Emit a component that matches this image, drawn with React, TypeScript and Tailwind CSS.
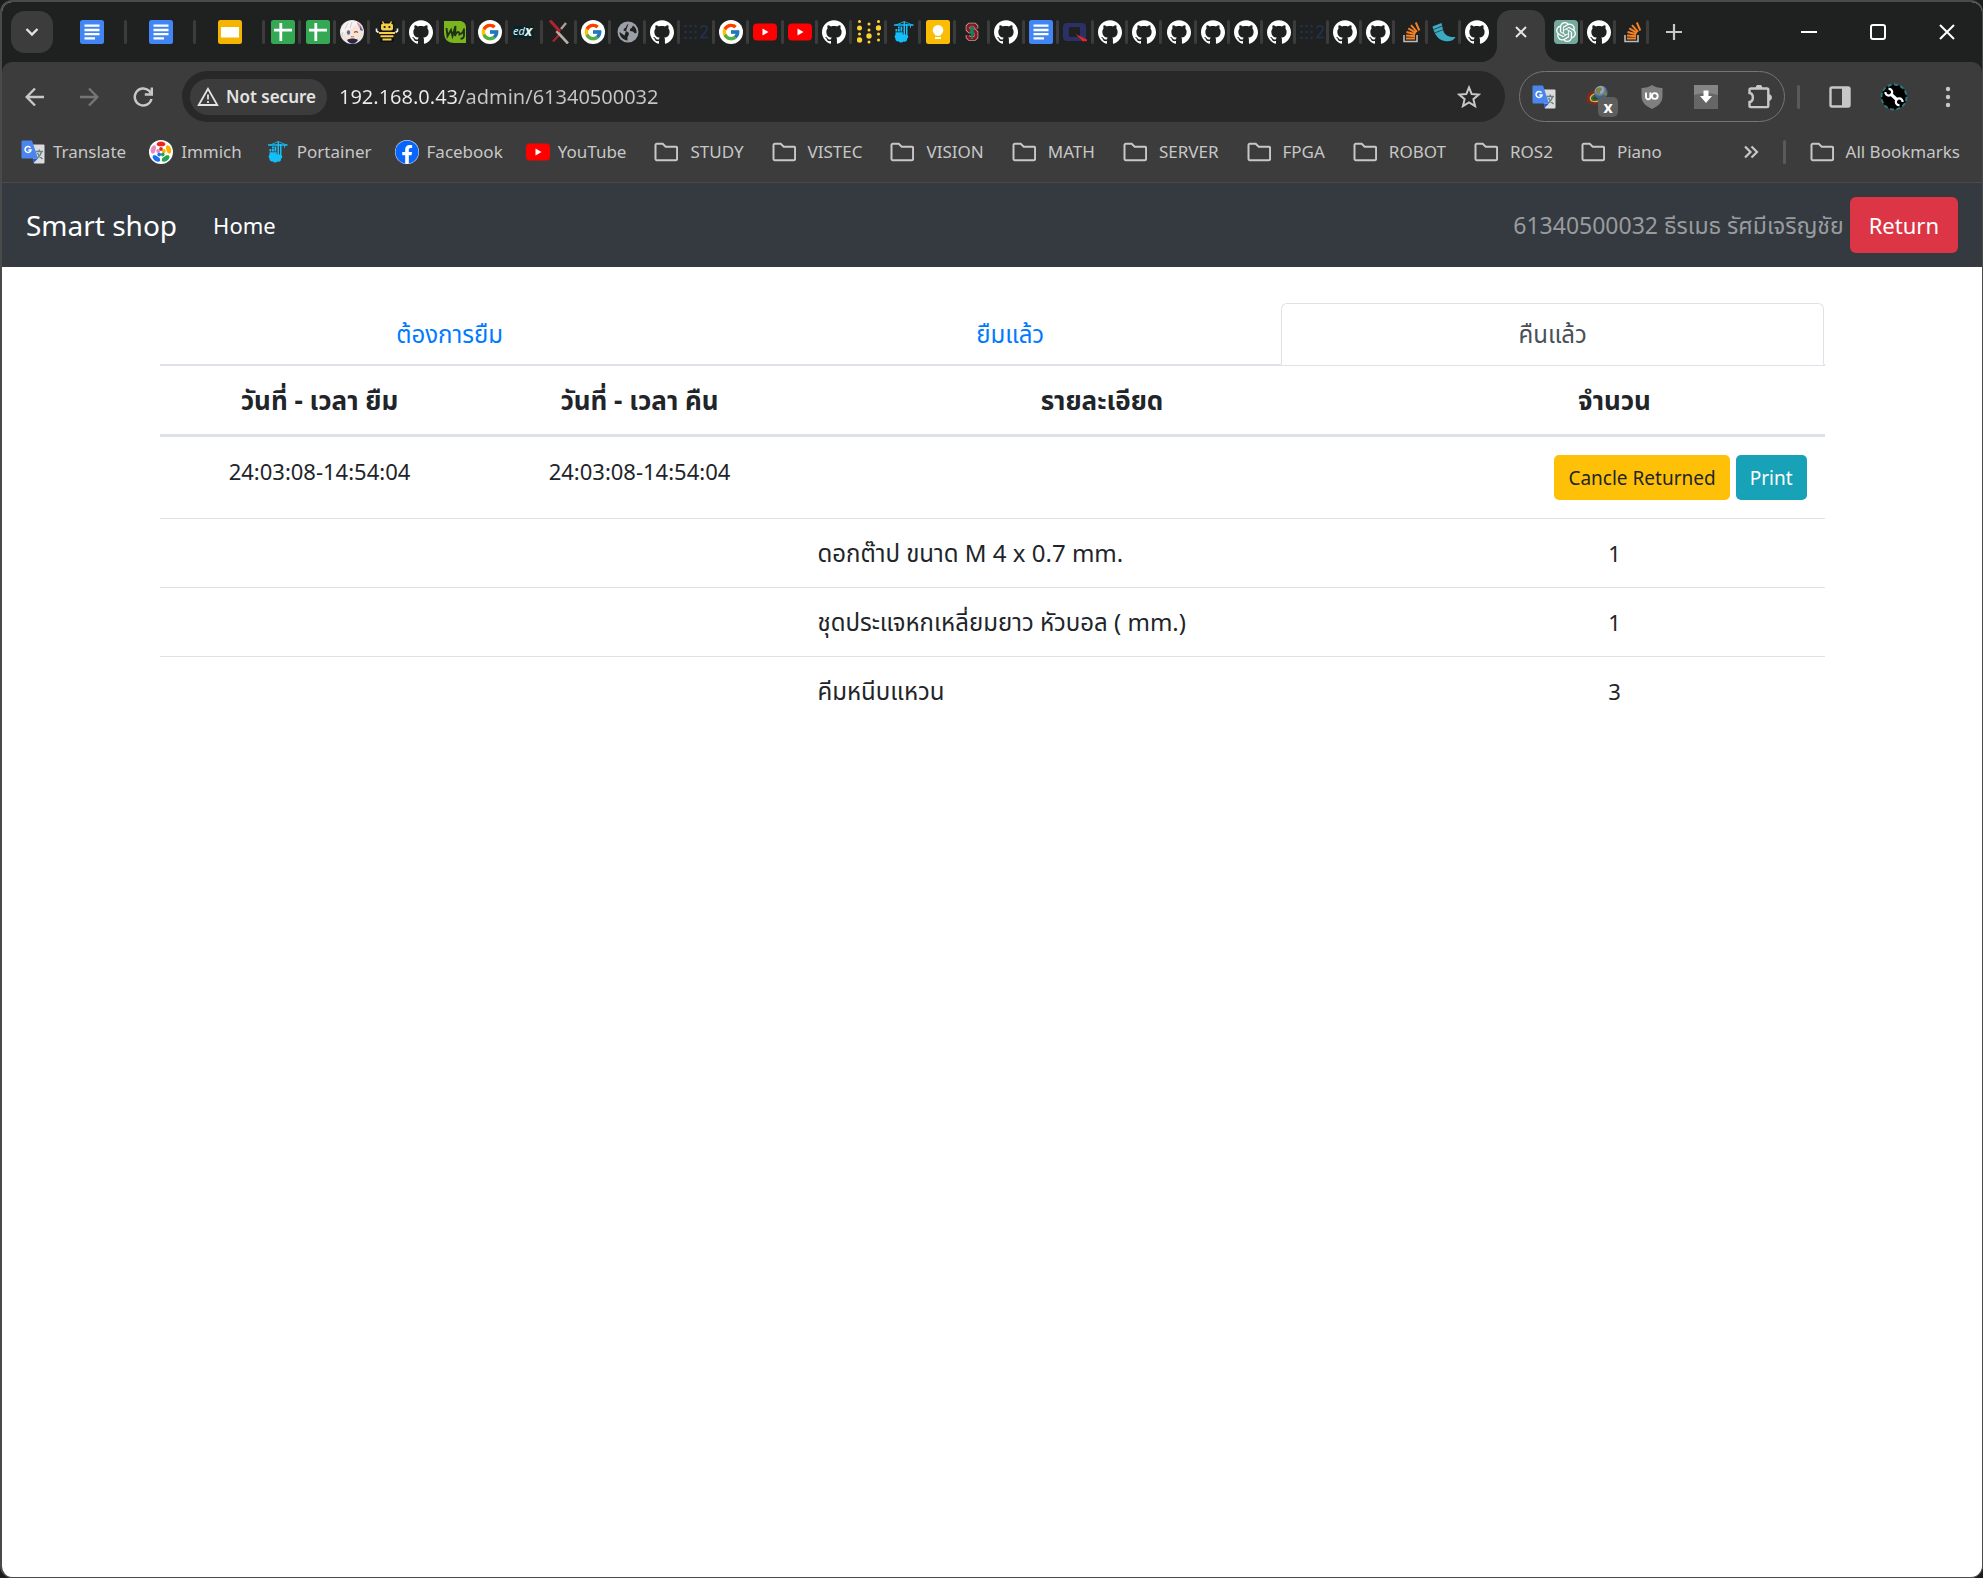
import React from "react";
import { FcGoogle } from "react-icons/fc";
import { SiGithub, SiOpenai } from "react-icons/si";
import { FaFacebook } from "react-icons/fa";

type IconProps = { className?: string };

const Docs = () => (
  <svg viewBox="0 0 24 24" className="size-6">
    <rect width="24" height="24" rx="2.5" fill="#4285f4" />
    <path d="M4.5 5.7h15M4.5 10h15M4.5 14.2h15M4.5 18.4h10.5" stroke="#fff" strokeWidth="2.3" />
  </svg>
);

const Slides = () => (
  <svg viewBox="0 0 24 24" className="size-6">
    <rect width="24" height="24" rx="2.5" fill="#f5b400" />
    <rect x="3" y="7" width="18" height="10.5" fill="#fff" />
  </svg>
);

const Sheets = () => (
  <svg viewBox="0 0 24 24" className="size-6">
    <rect width="24" height="24" rx="2.5" fill="#34a853" />
    <path d="M3 10.2h18M9.8 3v18" stroke="#fff" strokeWidth="2.8" />
  </svg>
);

const Character = () => (
  <svg viewBox="0 0 24 24" className="size-6">
    <circle cx="12" cy="12" r="12" fill="#ece4e1" />
    <path d="M5 10c2-4 11-5 15-1 2 4 0 9-4 10H9c-4-2-5-5-4-9Z" fill="#fbe3d3" />
    <path d="M1 10C3 3 9 0 14 1c5 1 8 5 9 9-4-1-6-3-8-5-2 4-6 5-9 5l-3 6Z" fill="#f6f2f3" />
    <path d="M8 3 5 9M12 2l-2 6M3 12l-1 5" stroke="#c9bfc6" strokeWidth=".8" />
    <path d="M17 2c3 2 6 5 6 9l-3-2c-1-2-3-4-3-7Z" fill="#d99aa6" />
    <path d="M20 6l3 5-3-1Z" fill="#3f62a8" />
    <ellipse cx="8.5" cy="12.5" rx="1.6" ry="2.2" fill="#4c6aa5" />
    <path d="M14 12.5q2-1.6 4 0" stroke="#8a5a4f" strokeWidth="1.2" fill="none" />
    <path d="M11 16.5q1.5 1 3 0" stroke="#c06c5a" strokeWidth="1" fill="none" />
    <path d="M7 20c3-2 8-2 11 0-3 5-8 5-11 0Z" fill="#2b2547" />
  </svg>
);

const Bee = () => (
  <svg viewBox="0 0 24 24" className="size-6">
    <path d="M5 2h14v20H5z" fill="#111" />
    <path d="M3.500 12.500 1.500 11V8.500M20.500 12.500l2-1.500V8.500" stroke="#eee" strokeWidth="1.600" fill="none" />
    <path d="M7.500 1.500 9 4M16.500 1.500 15 4" stroke="#f5cf4a" strokeWidth="1.400" />
    <rect x="6" y="3.500" width="12" height="7" rx="2" fill="#f5cf4a" />
    <rect x="8.700" y="6" width="1.800" height="2" fill="#222" />
    <rect x="13.500" y="6" width="1.800" height="2" fill="#222" />
    <path d="M4 13h16M5.500 16.300h13M7.500 19.600h9" stroke="#f5cf4a" strokeWidth="2" />
  </svg>
);

const Leaf = () => (
  <svg viewBox="0 0 24 24" className="size-6">
    <path d="M1 1h15c4.500 0 7 2.500 7 7v15H11C4.500 23 1 19 1 12Z" fill="#7ab51d" />
    <path
      d="m3.500 8 1 8 3.500-6 1.500 6L12.500 6l-.5 10c1-4.500 4.500-5.500 4.500-1.500 3.500-1.500 4.500-3 4.500-6v7c0 2-1.500 3.500-3.500 3"
      stroke="#20301b"
      strokeWidth="1.900"
      fill="none"
    />
  </svg>
);

const Google = () => (
  <span className="flex size-6 items-center justify-center rounded-full bg-white">
    <FcGoogle className="size-5" />
  </span>
);

const Edx = () => (
  <svg viewBox="0 0 24 24" className="size-6">
    <rect x="1" y="6" width="21" height="12" fill="#02262b" />
    <text x="1" y="15" fontSize="11" fontStyle="italic" fill="#e8eeee" fontFamily="Noto Sans, sans-serif">
      ed
      <tspan fontWeight="700" fontSize="14" dy="1">
        x
      </tspan>
    </text>
  </svg>
);

const CrossX = () => (
  <svg viewBox="0 0 24 24" className="size-6">
    <path d="M19 3 14 9" stroke="#a9a29c" strokeWidth="2.400" />
    <path d="M12.500 14.500 6 21.500" stroke="#a5242b" strokeWidth="2.400" />
    <path d="M9.500 11 21 23.500" stroke="#b8b0a8" strokeWidth="2.600" />
    <path d="M3 .5 13 11.500" stroke="#b3232b" strokeWidth="3" />
  </svg>
);

const Globe = () => (
  <svg viewBox="0 0 24 24" className="size-6">
    <circle cx="12" cy="12" r="10.500" fill="#9aa0a6" />
    <path d="M12.500 3.500C11 5 10 6 10 7.500 8.500 8 7.500 9 7.500 10.500c1.500 1 4 .5 5 2s0 3-1 4.500v3.500C7 20 3.500 16.500 3.500 12l5 3.500" fill="#202222" />
    <path d="M17 5.500c-1 1-.5 2-1.500 2.500s-2 1-1.500 2.500 3.500.5 4 2 1.500.500 2.500.5c.5-3-1-6-3.500-7.500Z" fill="#202222" />
    <path d="M4 9.500c.5 2 2.500 2 4 3" stroke="#9aa0a6" strokeWidth="1.500" fill="none" />
  </svg>
);

const Ros = () => (
  <svg viewBox="0 0 24 24" className="size-6">
    {[6, 12, 18].map((y) =>
      [1.5, 6.5, 11.5].map((x) => <circle key={`${x}-${y}`} cx={x} cy={y} r="1.3" fill="#22314e" />),
    )}
    <path d="M17 8c.5-3 6-3 6 .5 0 2.500-3.500 5-6 9h7" stroke="#22314e" strokeWidth="1.600" fill="none" />
  </svg>
);

const YouTube = () => (
  <svg viewBox="0 0 24 24" className="size-6">
    <rect y="3.500" width="24" height="17" rx="4" fill="#f00" />
    <path d="M9.500 8.500v7l6-3.500Z" fill="#fff" />
  </svg>
);

const YellowDots = () => (
  <svg viewBox="0 0 24 24" className="size-6" fill="#fdd32f">
    {[
      [2.5, 1.5, 1.5], [2.5, 8, 2.5], [2.5, 14, 1.5], [2.5, 20, 2.7],
      [12, 4, 1.5], [12, 10, 1.5], [12, 16, 2.7], [12, 22, 1.5],
      [21.5, 1.5, 1.5], [21.5, 8, 2.7], [21.5, 14, 1.5], [21.5, 20, 1.5],
    ].map(([x, y, r]) => (
      <circle key={`${x}-${y}`} cx={x} cy={y} r={r} />
    ))}
  </svg>
);

const Portainer = () => (
  <svg viewBox="0 0 24 24" className="size-6" fill="#13bef9">
    <path d="M3 4.300h19.500v1.400H3z" />
    <path d="M12.500 1.500h1.500V15h-1.500zM15 4h1.500v11.500H15z" />
    <path d="M13.200 1.500 21.500 5M13.200 1.500 5 5M19.500 5v3" stroke="#13bef9" strokeWidth=".8" fill="none" />
    <path d="M4.500 9h1.800v2.500H4.500zM7 9h1.800v2.500H7zM7 6.500h1.800v2H7zM9.500 6.500h1.800v5H9.500zM4.500 12.200h7.300V15H4.500z" />
    <path d="M5.500 14.500h10c2.500 1 2 3.500.5 4.200.3 2-1.500 3.800-3.500 2.800-1.500 1.500-4 1.200-4.800-.3C5.500 22 3.800 20 4.500 18.300c-1.500-1.300-.8-3.500 1-3.800Z" />
  </svg>
);

const Keep = () => (
  <svg viewBox="0 0 24 24" className="size-6">
    <rect width="24" height="24" rx="2.500" fill="#fbbc04" />
    <circle cx="12" cy="10.300" r="5.300" fill="#fff" />
    <path d="M9 13h6v2.500H9zM9 17h6v2H9z" fill="#fff" />
  </svg>
);

const sCurve = "M16 8.500V6.500L14.500 5h-5L8 6.500v3L9.500 11h5l1.500 1.500V17l-1.500 1.500h-5L8 17v-2";

const Stanford = () => (
  <svg viewBox="0 0 24 24" className="size-6">
    <path d={sCurve} fill="none" stroke="#b5a5a2" strokeWidth="4.600" />
    <path d={sCurve} fill="none" stroke="#8f141b" strokeWidth="3" />
    <path d="m12 4.500-2.500 5.500h1L9 14h2v5h2v-5h2l-1.500-4h1Z" fill="#1f7c60" />
  </svg>
);

const QLogo = () => (
  <svg viewBox="0 0 24 24" className="size-6">
    <rect y="3" width="23" height="18" rx="4" fill="#2b3164" />
    <rect x="6" y="7" width="11" height="10" rx="1" fill="#1f2121" />
    <path d="m12.500 14 11.500 5.500V21l-4 .5Z" fill="#e3262b" />
  </svg>
);

const StackOverflow = () => (
  <svg viewBox="0 0 24 24" className="size-6">
    <path d="M5 15v6.500h13V15" stroke="#bcbbbb" strokeWidth="1.600" fill="none" />
    <path
      d="M7 18.600h9M7 15.500l9 .8M7.500 12l8.700 2.200M9.300 8.300l7.700 4.500M12 5.200l6 6.600M16.800 2.500l3.500 8"
      stroke="#f48024"
      strokeWidth="2"
    />
  </svg>
);

const OpenAi = () => (
  <span className="flex size-6 items-center justify-center rounded-sm bg-[#75a99c]">
    <SiOpenai className="size-5 text-white" />
  </span>
);

const GitHub = () => <SiGithub className="size-6 text-white" />;

const Flask = () => (
  <svg viewBox="0 0 24 24" className="size-6">
    <path d="M.5 6.500 9.500 3 11 9.500c1 5 5 8 12.500 7.500-1.500 3.500-6 5-11 4C5.500 19.500 2.500 14 .5 6.500Z" fill="#3babc3" />
    <path d="M1.500 9.500 10.500 6M2.500 13l9-3.500" stroke="#1f2121" strokeWidth=".7" />
  </svg>
);

const TranslateIcon = () => (
  <svg viewBox="0 0 24 24" className="size-6">
    <path d="M9 4.500h13.500a1 1 0 0 1 1 1v17a1 1 0 0 1-1 1H13Z" fill="#dcdcdc" />
    <path d="M12 18.500h5l-4.500 4.500Z" fill="#2a56c6" />
    <path d="M1.500.5H11l6 18H1.500a1 1 0 0 1-1-1v-16a1 1 0 0 1 1-1Z" fill="#4a86ee" />
    <path d="M9.500 7.700A3 3 0 1 0 10 10H7.300" stroke="#fff" strokeWidth="1.500" fill="none" />
    <path
      d="M14.500 11.500h7.500M18.200 9.500v2M20.500 11.500c-.5 3-2.500 5.500-4.500 7M16.500 13c1 2.500 3 4.500 5 6"
      stroke="#66808c"
      strokeWidth="1.400"
      fill="none"
    />
  </svg>
);

const Immich = () => (
  <svg viewBox="0 0 24 24" className="size-6">
    <circle cx="12" cy="12" r="12" fill="#fff" />
    {[
      ["#e8261c", 0],
      ["#fbb100", 72],
      ["#22a54a", 144],
      ["#1d6ff2", 216],
      ["#e58bbd", 288],
    ].map(([c, a]) => (
      <g key={a} transform={`rotate(${a} 12 12)`}>
        <path d="M7.500 4.200C8.500.6 15.500.6 16.500 4.200 16 5.500 15 6 14 6.200h-4C9 6 8 5.500 7.500 4.200Z" fill={String(c)} />
        <circle cx="12" cy="9" r="1.900" fill={String(c)} />
      </g>
    ))}
  </svg>
);

const Facebook = () => (
  <span className="flex size-6 items-center justify-center rounded-full bg-white">
    <FaFacebook className="size-6 text-[#0866ff]" />
  </span>
);

const Folder = () => (
  <svg viewBox="0 0 24 24" className="mr-1 size-6" fill="none" stroke="#c7c7c7" strokeWidth="2">
    <path d="M1.500 19V5a1.200 1.200 0 0 1 1.200-1.200h6l3 3h10.200a1.200 1.200 0 0 1 1.200 1.200v11a1.200 1.200 0 0 1-1.200 1.200H2.700A1.200 1.200 0 0 1 1.500 19Z" />
  </svg>
);

const pinned = [Docs, Docs, Slides];
const compact = [
  Sheets, Sheets, Character, Bee, GitHub, Leaf, Google, Edx, CrossX, Google, Globe, GitHub, Ros, Google,
  YouTube, YouTube, GitHub, YellowDots, Portainer, Keep, Stanford, GitHub, Docs, QLogo, GitHub, GitHub, GitHub,
];
const narrow = [GitHub, GitHub, GitHub, Ros, GitHub, GitHub, StackOverflow, Flask, GitHub];
const trailing = [OpenAi, GitHub, StackOverflow];

function Tab({ icon: Icon, size, divider = true }: { icon: React.FC<IconProps>; size: string; divider?: boolean }) {
  return (
    <button
      type="button"
      aria-label="Tab"
      className={`relative flex h-[60px] items-center justify-center ${size}`}
    >
      <Icon />
      {divider && <span className="absolute -right-px h-6 w-[3px] rounded-full bg-[#3c3c3c]" />}
    </button>
  );
}

function TabStrip() {
  return (
    <div className="flex h-[60px] shrink-0 items-center bg-[#1f2121] pl-[9px]">
      <button
        type="button"
        aria-label="Search tabs"
        className="mr-1 flex size-[42px] items-center justify-center rounded-[14px] bg-[#3c3c3c]"
      >
        <svg viewBox="0 0 16 16" className="size-4" fill="none" stroke="#e3e3e3" strokeWidth="2.400">
          <path d="m2.500 5 5.500 5.500L13.500 5" />
        </svg>
      </button>
      {pinned.map((icon, i) => (
        <Tab key={i} icon={icon} size="w-[69px]" />
      ))}
      <div className="ml-0.5 flex w-[930px]">
        {compact.map((icon, i) => (
          <Tab key={i} icon={icon} size="flex-1" />
        ))}
      </div>
      <div className="flex">
        {narrow.map((icon, i) => (
          <Tab key={i} icon={icon} size="w-[33px]" divider={i < narrow.length - 1} />
        ))}
      </div>
      <div className="relative mx-1 flex h-[52px] w-12 items-center justify-center self-end rounded-t-[14px] bg-[#3c3c3c] pb-2">
        <svg viewBox="0 0 16 16" className="absolute bottom-0 -left-4 size-4" fill="#3c3c3c">
          <path d="M16 0v16H0A16 16 0 0 0 16 0Z" />
        </svg>
        <svg viewBox="0 0 16 16" className="absolute -right-4 bottom-0 size-4" fill="#3c3c3c">
          <path d="M0 0v16h16A16 16 0 0 1 0 0Z" />
        </svg>
        <button type="button" aria-label="Close tab">
          <svg viewBox="0 0 12 12" className="size-3" stroke="#e3e3e3" strokeWidth="2">
            <path d="m1 1 10 10M11 1 1 11" />
          </svg>
        </button>
      </div>
      {trailing.map((icon, i) => (
        <Tab key={i} icon={icon} size="w-[33px]" />
      ))}
      <button type="button" aria-label="New tab" className="ml-4 flex size-5 items-center justify-center">
        <svg viewBox="0 0 16 16" className="size-4" stroke="#c7c7c7" strokeWidth="2.200">
          <path d="M8 0v16M0 8h16" />
        </svg>
      </button>
      <div className="ml-auto flex">
        <button type="button" aria-label="Minimize" className="flex h-[60px] w-[68px] items-center justify-center">
          <svg viewBox="0 0 16 16" className="size-4" stroke="#fff" strokeWidth="2">
            <path d="M0 8h16" />
          </svg>
        </button>
        <button type="button" aria-label="Maximize" className="flex h-[60px] w-[69px] items-center justify-center">
          <span className="size-4 rounded-[3px] border-2 border-white" />
        </button>
        <button type="button" aria-label="Close" className="flex h-[60px] w-[70px] items-center justify-center">
          <svg viewBox="0 0 16 16" className="size-4" stroke="#fff" strokeWidth="2">
            <path d="m1 1 14 14M15 1 1 15" />
          </svg>
        </button>
      </div>
    </div>
  );
}

function Toolbar() {
  return (
    <div className="flex h-[69px] items-center pr-[22px] pl-[21px]">
      <div className="flex w-[159px] gap-[30px]">
        <button type="button" aria-label="Back">
          <svg viewBox="0 0 24 24" className="size-6" fill="none" stroke="#c7c7c7" strokeWidth="2.400">
            <path d="M21 12H4.500M12 3.500 3.700 12l8.300 8.500" />
          </svg>
        </button>
        <button type="button" aria-label="Forward">
          <svg viewBox="0 0 24 24" className="size-6" fill="none" stroke="#757575" strokeWidth="2.400">
            <path d="M3 12h16.500M12 3.500l8.300 8.500-8.300 8.500" />
          </svg>
        </button>
        <button type="button" aria-label="Reload">
          <svg viewBox="0 0 24 24" className="size-6" fill="none" stroke="#c7c7c7" strokeWidth="2.400">
            <path d="M20.500 14A8.500 8.500 0 1 1 18 5.700l2.500 3M20.800 2.500V9.500h-7" />
          </svg>
        </button>
      </div>
      <div className="flex h-[51px] flex-1 items-center rounded-full bg-[#282828] pr-6 pl-2">
        <button
          type="button"
          className="flex h-9 shrink-0 items-center gap-[7px] rounded-full bg-[#3c3c3c] pr-[11px] pl-[7px] text-[17px] font-semibold text-[#e3e3e3]"
        >
          <svg viewBox="0 0 22 22" className="size-[22px]" fill="none" stroke="#e3e3e3" strokeWidth="1.800">
            <path d="M11 2.800 1.700 19h18.600ZM11 8.500v5M11 15v2" />
          </svg>
          Not secure
        </button>
        <input
          aria-label="Address"
          defaultValue="192.168.0.43/admin/61340500032"
          className="ml-3 min-w-0 flex-1 bg-[linear-gradient(90deg,#ececec_120px,#c7c7c7_120px)] bg-clip-text text-xl text-transparent outline-none"
        />
        <button type="button" aria-label="Bookmark this page">
          <svg viewBox="0 0 24 24" className="size-6" fill="none" stroke="#c7c7c7" strokeWidth="2">
            <path d="m12 2.500 2.700 6.600 7.100.5-5.400 4.600 1.700 7-6.100-3.800-6.100 3.800 1.700-7-5.400-4.600 7.100-.5Z" />
          </svg>
        </button>
      </div>
      <div className="ml-3.5 flex h-[51px] items-center gap-[30px] rounded-full border border-[#757575] px-3">
        <button type="button" aria-label="Translate extension">
          <TranslateIcon />
        </button>
        <button type="button" aria-label="Proxy extension" className="relative">
          <svg viewBox="0 0 24 24" className="size-6">
            <defs>
              <radialGradient id="earth" cx=".4" cy=".3">
                <stop offset="0" stopColor="#dfe9f2" />
                <stop offset="1" stopColor="#44628f" />
              </radialGradient>
            </defs>
            <path d="M11 6.500C5 7 1.500 10.500 2 14s5 5 12 3" fill="none" stroke="#7e2a22" strokeWidth="3.500" />
            <path d="M11 8.500c-4.500.5-7 3-6.500 5.500s4.500 3 9 1.500" fill="none" stroke="#d8c83c" strokeWidth="1.600" />
            <path d="M11 10c-3.500.5-5.500 2-5 4s4 1.500 8 0" fill="none" stroke="#2f6b3c" strokeWidth="1.800" />
            <circle cx="15" cy="7.500" r="6.800" fill="url(#earth)" />
            <path d="M10 4c2-2.500 6-2.500 6 0s-2 2-2 4-3 1-4-1ZM18 6c2 0 3 1 3 3s-2 2-3 1Z" fill="#7d8247" />
          </svg>
          <span className="absolute top-3 left-3 flex size-5 items-center justify-center rounded-[5px] bg-[#5e5e5e] text-base font-bold text-white">
            x
          </span>
        </button>
        <button type="button" aria-label="Content blocker">
          <svg viewBox="0 0 24 24" className="size-6">
            <path d="M12 0c3 2 6 2.800 10.500 3v8c0 6-4 10-10.500 13C5.500 21 1.500 17 1.500 11V3C6 2.800 9 2 12 0Z" fill="#7f7f7f" />
            <path d="M6 7.500v4.500a2.200 2.200 0 0 0 4.400 0V7.500" stroke="#fff" strokeWidth="1.900" fill="none" />
            <circle cx="14.800" cy="11" r="2.900" stroke="#fff" strokeWidth="1.900" fill="none" />
          </svg>
        </button>
        <button type="button" aria-label="Download helper">
          <svg viewBox="0 0 24 24" className="size-6">
            <rect width="24" height="24" fill="#666" />
            <path d="M0 0h24v10l-6-1.500H6L0 10Z" fill="#858585" />
            <path d="M9.500 5.500h5V11H18l-6 7-6-7h3.500Z" fill="#fff" />
          </svg>
        </button>
        <button type="button" aria-label="Extensions">
          <svg viewBox="0 0 24 24" className="size-6" fill="none" stroke="#c7c7c7" strokeWidth="2.400">
            <path d="M1.500 8V4.800a1.300 1.300 0 0 1 1.300-1.300H19a1.300 1.300 0 0 1 1.300 1.300v16a1.300 1.300 0 0 1-1.300 1.300H2.800a1.300 1.300 0 0 1-1.300-1.300V17c4.500-.5 4.500-8.500 0-9Z" />
            <path d="M8 3a3 3 0 0 1 6 0ZM20.500 9.500a3 3 0 0 1 0 6Z" fill="#c7c7c7" strokeWidth="1" />
          </svg>
        </button>
      </div>
      <span className="ml-3 h-6 w-[3px] rounded-full bg-[#5a5a5a]" />
      <div className="ml-7 flex items-center gap-7">
        <button type="button" aria-label="Side panel">
          <svg viewBox="0 0 24 24" className="size-6">
            <rect x="2.500" y="2.500" width="19" height="19" rx="1.500" fill="none" stroke="#c7c7c7" strokeWidth="2.400" />
            <path d="M14 3h7v18h-7z" fill="#c7c7c7" />
          </svg>
        </button>
        <button type="button" aria-label="Profile">
          <svg viewBox="0 0 28 28" className="size-7">
            <circle cx="14" cy="14" r="12.500" fill="#000" stroke="#2a7b80" strokeWidth="1.800" strokeDasharray="4 2.500" />
            <path d="m10.500 10.800 7 6.400" stroke="#fff" strokeWidth="3.200" />
            <path
              d="M8.500 5.800A3.400 3.400 0 1 1 5.400 9M19.500 22.200a3.400 3.400 0 1 1 3.100-3.200"
              fill="none"
              stroke="#fff"
              strokeWidth="2.200"
            />
          </svg>
        </button>
        <button type="button" aria-label="Menu">
          <svg viewBox="0 0 24 24" className="size-6" fill="#c7c7c7">
            <circle cx="12" cy="4" r="2.200" />
            <circle cx="12" cy="12" r="2.200" />
            <circle cx="12" cy="20" r="2.200" />
          </svg>
        </button>
      </div>
    </div>
  );
}

const sites: [React.FC<IconProps>, string][] = [
  [TranslateIcon, "Translate"],
  [Immich, "Immich"],
  [Portainer, "Portainer"],
  [Facebook, "Facebook"],
  [YouTube, "YouTube"],
];
const folders = ["STUDY", "VISTEC", "VISION", "MATH", "SERVER", "FPGA", "ROBOT", "ROS2", "Piano"];

function Bookmark({ icon: Icon, label }: { icon: React.FC<IconProps>; label: string }) {
  return (
    <a href="#" className="flex items-center gap-2 whitespace-nowrap">
      <Icon />
      {label}
    </a>
  );
}

function BookmarksBar() {
  return (
    <nav className="flex h-[42px] items-center pr-[22px] pl-[19px] text-[17px] text-[#c7c7c7]">
      <div className="flex gap-[23px]">
        {sites.map(([icon, label]) => (
          <Bookmark key={label} icon={icon} label={label} />
        ))}
      </div>
      <div className="ml-7 flex gap-7">
        {folders.map((label) => (
          <Bookmark key={label} icon={Folder} label={label} />
        ))}
      </div>
      <button type="button" aria-label="More bookmarks" className="ml-auto">
        <svg viewBox="0 0 16 16" className="size-4" fill="none" stroke="#c7c7c7" strokeWidth="2.200">
          <path d="m2 2.500 5.500 5.500L2 13.500M8.500 2.500 14 8l-5.500 5.500" />
        </svg>
      </button>
      <span className="mx-6 h-6 w-[3px] rounded-full bg-[#5a5a5a]" />
      <Bookmark icon={Folder} label="All Bookmarks" />
    </nav>
  );
}

function SiteNav() {
  return (
    <header className="flex h-[84px] items-center bg-[#343a40] px-6 text-[22px] text-white">
      <a href="#" className="mr-9 text-[28px]">
        Smart shop
      </a>
      <a href="#">Home</a>
      <span className="mr-1.5 ml-auto text-[23px] text-[#999c9f]">61340500032 ธีรเมธ รัศมีเจริญชัย</span>
      <button type="button" className="h-14 rounded-md bg-[#dc3545] px-[19px]">
        Return
      </button>
    </header>
  );
}

const items = [
  { name: "ดอกต๊าป ขนาด M 4 x 0.7 mm.", qty: 1 },
  { name: "ชุดประแจหกเหลี่ยมยาว หัวบอล ( mm.)", qty: 1 },
  { name: "คีมหนีบแหวน", qty: 3 },
];

function Returns() {
  return (
    <main className="mx-auto w-full max-w-[1665px] pt-9 text-[22px] leading-8 text-[#212529]">
      <div role="tablist" className="flex border-b border-[#dee2e6] text-[24px] text-[#007bff]">
        <button type="button" role="tab" className="-mb-px h-[62px] flex-auto px-6">
          ต้องการยืม
        </button>
        <button type="button" role="tab" className="-mb-px h-[62px] flex-auto px-6">
          ยืมแล้ว
        </button>
        <button
          type="button"
          role="tab"
          aria-selected="true"
          className="-mb-px h-[62px] flex-auto rounded-t-md border border-[#dee2e6] border-b-white bg-white px-6 text-[#495057]"
        >
          คืนแล้ว
        </button>
      </div>
      <table className="w-full table-fixed border-t border-[#dee2e6]">
        <thead>
          <tr className="h-[70px] border-b-3 border-[#dee2e6] text-[26px]">
            <th className="w-[320px]">วันที่ - เวลา ยืม</th>
            <th className="w-[320px]">วันที่ - เวลา คืน</th>
            <th>รายละเอียด</th>
            <th className="w-[420px]">จำนวน</th>
          </tr>
        </thead>
        <tbody>
          <tr className="align-top">
            <td className="py-[18px] text-center">24:03:08-14:54:04</td>
            <td className="py-[18px] text-center">24:03:08-14:54:04</td>
            <td />
            <td className="p-[18px]">
              <div className="flex justify-end gap-1.5 text-[19px]">
                <button type="button" className="h-[45px] rounded-[5px] bg-[#ffc107] px-3.5">
                  Cancle Returned
                </button>
                <button type="button" className="h-[45px] rounded-[5px] bg-[#17a2b8] px-3.5 text-white">
                  Print
                </button>
              </div>
            </td>
          </tr>
          {items.map((item) => (
            <tr key={item.name} className="border-t border-[#dee2e6]">
              <td />
              <td />
              <td className="p-[18px] text-[24px]">{item.name}</td>
              <td className="p-[18px] text-center">{item.qty}</td>
            </tr>
          ))}
        </tbody>
      </table>
    </main>
  );
}

export default function App() {
  return (
    <div className="min-h-screen bg-[#1c1c1c] font-['Noto_Sans','Noto_Sans_Thai',sans-serif]">
      <div className="flex min-h-screen flex-col overflow-hidden rounded-xl border border-t-2 border-l-2 border-[#4a4a4a] bg-white">
        <TabStrip />
        <div className="bg-[#1f2121]">
          <div className="rounded-t-[10px] border-b border-[#4a4a4a] bg-[#3c3c3c] pb-[9px]">
            <Toolbar />
            <BookmarksBar />
          </div>
        </div>
        <SiteNav />
        <Returns />
      </div>
    </div>
  );
}
